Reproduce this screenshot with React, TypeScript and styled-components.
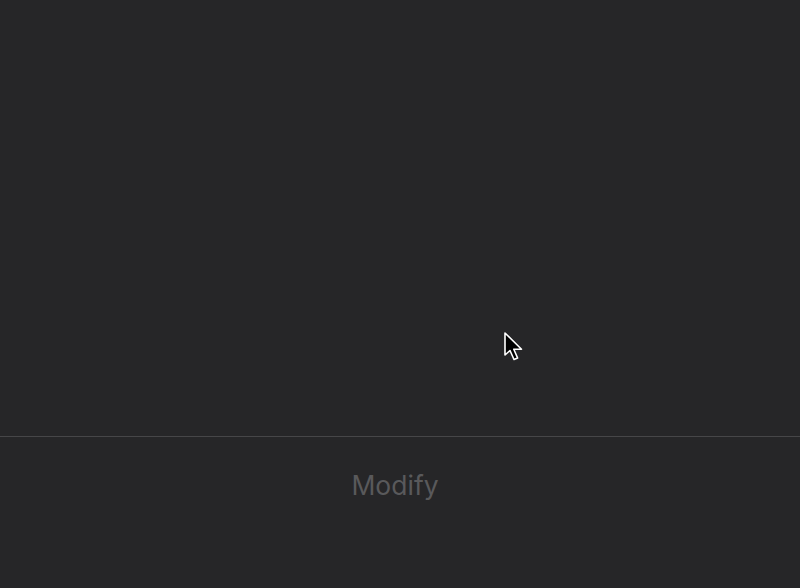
import styled, { createGlobalStyle } from "styled-components";

const GlobalStyle = createGlobalStyle`
  html, body {
    margin: 0;
    padding: 0;
    background: #262628;
  }
`;

const Screen = styled.div`
  width: 800px;
  height: 588px;
  display: flex;
  flex-direction: column;
  background: #262628;
  font-family: Inter, "Noto Sans", sans-serif;
  overflow: hidden;
`;

const Canvas = styled.div`
  position: relative;
  height: 436px;
  border-bottom: 1px solid #464648;
`;

// pointer floats over the empty canvas
const Pointer = styled.svg`
  position: absolute;
  left: 503px;
  top: 331px;
`;

const Footer = styled.div`
  flex: 1;
  display: flex;
  justify-content: center;
  padding-top: 31px;
`;

const ActionLabel = styled.span`
  font-size: 26.5px;
  line-height: 34px;
  color: #59595b;
  margin-left: -10px;
`;

export default function App() {
  return (
    <Screen>
      <GlobalStyle />
      <Canvas>
        <Pointer width="24" height="32" viewBox="0 0 24 32">
          <path
            d="M2 2 L2 24 L7 19.5 L11 28.5 L14.6 27 L10.8 18.3 L18.5 18.3 Z"
            fill="#000"
            stroke="#fff"
            strokeWidth="1.6"
            strokeLinejoin="round"
          />
        </Pointer>
      </Canvas>
      <Footer>
        <ActionLabel>Modify</ActionLabel>
      </Footer>
    </Screen>
  );
}
